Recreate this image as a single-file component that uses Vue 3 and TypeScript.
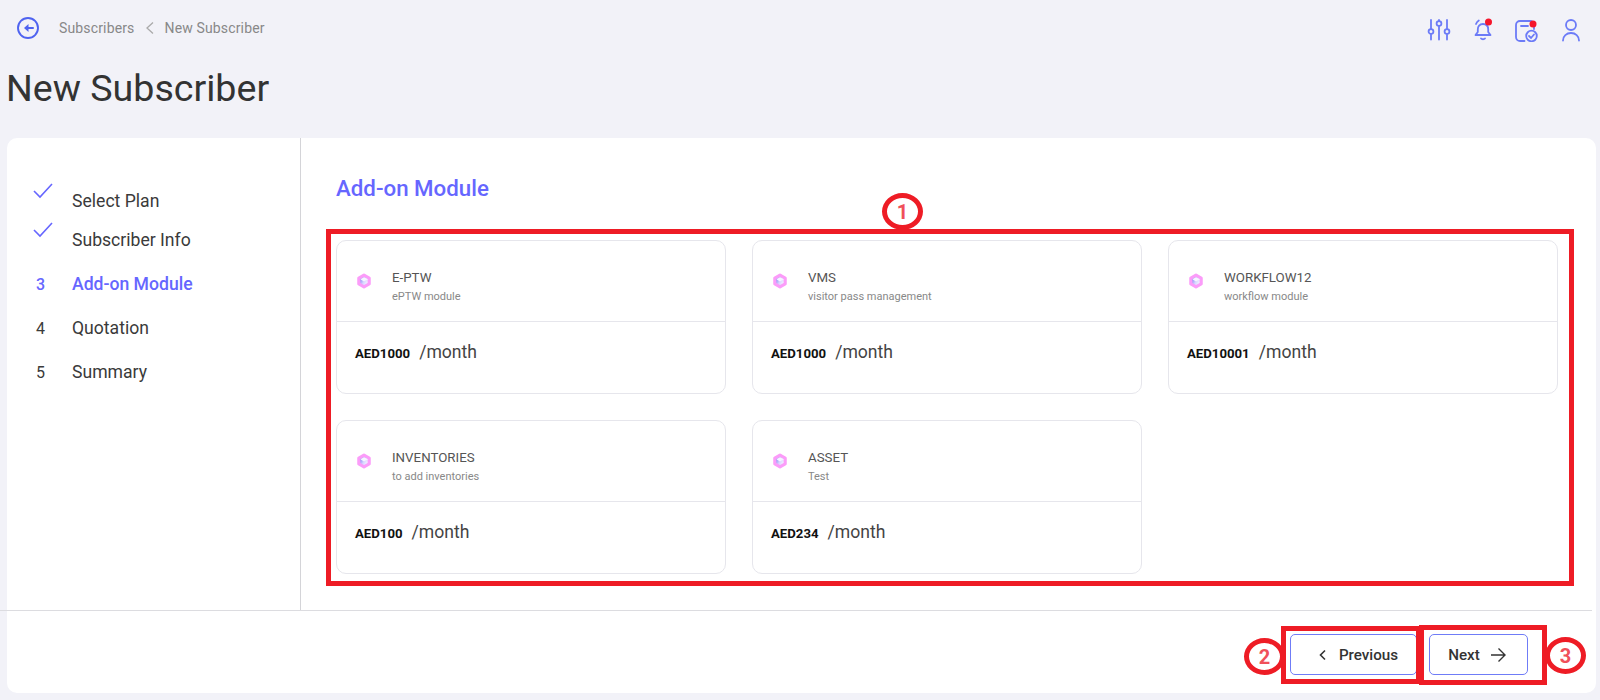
<script setup lang="ts">
interface Step { mark: string; label: string; state: 'done' | 'active' | 'todo' }
interface Mod { name: string; desc: string; price: string }

const steps: Step[] = [
  { mark: '', label: 'Select Plan', state: 'done' },
  { mark: '', label: 'Subscriber Info', state: 'done' },
  { mark: '3', label: 'Add-on Module', state: 'active' },
  { mark: '4', label: 'Quotation', state: 'todo' },
  { mark: '5', label: 'Summary', state: 'todo' },
]

const modules: Mod[] = [
  { name: 'E-PTW', desc: 'ePTW module', price: 'AED1000' },
  { name: 'VMS', desc: 'visitor pass management', price: 'AED1000' },
  { name: 'WORKFLOW12', desc: 'workflow module', price: 'AED10001' },
  { name: 'INVENTORIES', desc: 'to add inventories', price: 'AED100' },
  { name: 'ASSET', desc: 'Test', price: 'AED234' },
]
</script>

<template>
  <div class="page">
    <svg width="0" height="0" class="defs">
      <defs>
        <linearGradient id="cubeFill" x1="0" y1="0.1" x2="1" y2="0.7">
          <stop offset="0" stop-color="#5f66f0" />
          <stop offset="0.55" stop-color="#d6d4ff" />
          <stop offset="1" stop-color="#ffffff" />
        </linearGradient>
      </defs>
    </svg>
    <header class="topbar">
      <div class="crumbs">
        <svg class="back" width="24" height="24" viewBox="0 0 24 24" fill="none">
          <circle cx="12" cy="12" r="10" stroke="#4f63f0" stroke-width="1.9" />
          <path d="M17 12H11" stroke="#4f63f0" stroke-width="2" stroke-linecap="round" />
          <path d="M12.500 8L8 12l4.500 4z" fill="#4f63f0" />
        </svg>
        <span>Subscribers</span>
        <svg class="sep" width="10" height="14" viewBox="0 0 10 14" fill="none">
          <path d="M8 1.500L2 7l6 5.500" stroke="#aaa" stroke-width="1.300" />
        </svg>
        <span>New Subscriber</span>
      </div>
      <div class="tools">
        <svg width="24" height="24" viewBox="0 0 24 24" fill="none" stroke="#6c7bf7" stroke-width="1.800" stroke-linecap="round">
          <path d="M4 2v9M4 16.500v5M12 2v1M12 8.500v13M20 2v9M20 16.500v5" />
          <circle cx="4" cy="13.500" r="2.400" />
          <circle cx="12" cy="5.500" r="2.400" />
          <circle cx="20" cy="13.500" r="2.400" />
        </svg>
        <svg width="24" height="24" viewBox="0 0 24 24" fill="none" stroke="#6c7bf7" stroke-width="1.800" stroke-linecap="round" stroke-linejoin="round">
          <path d="M12 6c-3.500 0-5.200 2.500-5.200 5.500V14l-2.300 3h15l-2.300-3v-2.500c0-3-1.700-5.500-5.200-5.500z" />
          <path d="M10 20.500c.8 1 3.200 1 4 0" />
          <path d="M5 6c.6-1.500 1.600-2.700 2.800-3.500" />
          <circle cx="17.500" cy="4" r="3.500" fill="#f5162c" stroke="none" />
        </svg>
        <svg width="24" height="24" viewBox="0 0 24 24" fill="none" stroke="#6c7bf7" stroke-width="1.800" stroke-linecap="round">
          <path d="M9.500 23H5a4 4 0 0 1-4-4V7a4 4 0 0 1 4-4h10a4 4 0 0 1 4 4v4" />
          <path d="M6 8h7" />
          <circle cx="16.500" cy="18" r="5.300" />
          <path d="M14 18l2 2 3-3.500" />
          <circle cx="18" cy="6" r="3.500" fill="#f5162c" stroke="none" />
        </svg>
        <svg width="24" height="24" viewBox="0 0 24 24" fill="none" stroke="#6c7bf7" stroke-width="1.800" stroke-linecap="round">
          <circle cx="12" cy="7" r="5" />
          <path d="M4 22.500c0-4.500 3.500-7.500 8-7.500s8 3 8 7.500" />
        </svg>
      </div>
    </header>

    <h1 class="title">New Subscriber</h1>

    <section class="panel">
      <div class="panel-body">
        <aside class="steps">
          <div v-for="s in steps" :key="s.label" class="step" :class="s.state">
            <span class="mark">
              <svg v-if="s.state === 'done'" width="22" height="18" viewBox="0 0 22 18" fill="none">
                <path d="M2 9l6 6L20 2" stroke="#6666ff" stroke-width="1.600" />
              </svg>
              <template v-else>{{ s.mark }}</template>
            </span>
            <span class="label">{{ s.label }}</span>
          </div>
        </aside>

        <main class="content">
          <h2 class="heading">Add-on Module</h2>
          <div class="grid">
            <article v-for="m in modules" :key="m.name" class="mod">
              <div class="mod-head">
                <svg class="cube" width="18" height="18" viewBox="0 0 16 16">
                  <path d="M8 2.800l4.600 2.600v5.200L8 13.200l-4.600-2.600V5.400z" fill="url(#cubeFill)" stroke="#fb9cf9" stroke-width="2.800" stroke-linejoin="round" />
                  <path d="M8 8.500l3.300-2L8 4.700 4.700 6.500z" fill="#f6f5ff" />
                </svg>
                <div class="mod-text">
                  <div class="mod-name">{{ m.name }}</div>
                  <div class="mod-desc">{{ m.desc }}</div>
                </div>
              </div>
              <div class="mod-price">
                <b>{{ m.price }}</b>
                <span>/month</span>
              </div>
            </article>
          </div>
        </main>
      </div>

      <footer class="actions">
        <button class="btn prev" type="button">
          <svg width="12" height="14" viewBox="0 0 12 14" fill="none">
            <path d="M8 2.500L3.500 7 8 11.500" stroke="#333" stroke-width="1.600" />
          </svg>
          Previous
        </button>
        <button class="btn next" type="button">
          Next
          <svg width="18" height="16" viewBox="0 0 18 16" fill="none">
            <path d="M2 8h14M9.500 1.500L16 8l-6.500 6.500" stroke="#333" stroke-width="1.400" />
          </svg>
        </button>
      </footer>
    </section>

    <!-- Red annotations drawn over the screenshot -->
    <div class="pin pin-1">1</div>
    <div class="pin pin-2">2</div>
    <div class="pin pin-3">3</div>
    <div class="box box-grid"></div>
    <div class="box box-prev"></div>
    <div class="box box-next"></div>
  </div>
</template>

<style>
html, body { margin: 0; background: #f2f2f8; }
</style>

<style scoped>
.page {
  position: relative;
  width: 1600px;
  height: 700px;
  overflow: hidden;
  background: #f2f2f8;
  font-family: Roboto, "Liberation Sans", sans-serif;
  color: #333;
}
.defs { position: absolute; }
.topbar {
  display: flex;
  justify-content: space-between;
  align-items: center;
  height: 56px;
  padding: 0 17px 0 16px;
}
.crumbs {
  display: flex;
  align-items: center;
  font-size: 14px;
  letter-spacing: .15px;
  color: #888;
}
.back { margin-right: 19px; }
.sep { margin: 0 10px; }
.tools { display: flex; gap: 20px; padding-top: 3px; }
.title {
  margin: 0;
  padding: 8px 0 0 6px;
  font-size: 37.600px;
  line-height: 48px;
  font-weight: 400;
  color: #333;
}
.panel {
  margin: 26px 4px 0 7px;
  height: 555px;
  background: #fff;
  border-radius: 10px;
  display: flex;
  flex-direction: column;
}
.panel-body { display: flex; height: 472px; }
.steps {
  width: 294px;
  box-sizing: border-box;
  border-right: 1px solid #d4d4d8;
  padding: 41px 0 0 19px;
}
.step {
  display: flex;
  align-items: center;
  height: 44px;
  font-size: 17.600px;
  color: #3a3a3a;
}
.step.done { height: 39px; }
.step.done .mark { align-self: flex-start; padding-top: 3px; padding-left: 6px; }
.step.done .label { padding-top: 4px; }
.step.active { margin-top: 5px; color: #6666ff; font-weight: 500; }
.mark {
  width: 46px;
  padding-left: 10px;
  box-sizing: border-box;
  font-size: 16px;
}
.content { flex: 1; padding: 35px 36px 0 35px; }
.heading {
  margin: 0 0 37px;
  font-size: 22.300px;
  line-height: 30px;
  font-weight: 500;
  color: #6666ff;
}
.grid {
  display: grid;
  grid-template-columns: repeat(3, 390px);
  column-gap: 26px;
  row-gap: 26px;
}
.mod {
  height: 154px;
  box-sizing: border-box;
  border: 1px solid #e6e6ec;
  border-radius: 10px;
}
.mod-head {
  display: flex;
  align-items: center;
  height: 81px;
  box-sizing: border-box;
  padding-left: 18px;
  border-bottom: 1px solid #e6e6ec;
}
.cube { margin-right: 19px; }
.mod-text { padding-top: 10px; }
.mod-name { font-size: 13.300px; line-height: 18px; color: #555; }
.mod-desc { font-size: 11px; line-height: 14px; margin-top: 3px; color: #888; }
.mod-price {
  display: flex;
  align-items: baseline;
  gap: 9px;
  padding: 20px 0 0 18px;
}
.mod-price b { font-size: 13.200px; font-weight: 700; color: #111; }
.mod-price span { font-size: 17.600px; font-weight: 400; color: #444; }
.actions {
  flex: 1;
  border-top: 1px solid #dcdce0;
  margin-right: 4px;
  margin-left: -7px;
  display: flex;
  justify-content: flex-end;
  gap: 12px;
  padding: 23px 64px 0 0;
}
.btn {
  display: flex;
  align-items: center;
  justify-content: center;
  height: 41px;
  box-sizing: border-box;
  background: #fff;
  border: 1px solid #6f7cf7;
  border-radius: 5px;
  font-family: inherit;
  font-size: 15.200px;
  font-weight: 500;
  color: #333;
}
.prev { width: 127px; gap: 10px; padding: 0 0 0 8px; }
.next { width: 99px; gap: 9px; padding: 0 2px 0 0; }

.box { position: absolute; border: 5px solid #ee1c25; box-sizing: border-box; }
.box-grid { left: 326px; top: 229px; width: 1248px; height: 357px; }
.box-prev { left: 1281px; top: 626px; width: 140px; height: 58px; }
.box-next { left: 1419px; top: 625px; width: 128px; height: 60px; }
.pin {
  position: absolute;
  width: 41px;
  height: 37px;
  box-sizing: border-box;
  border: 5px solid #ee1c25;
  border-radius: 50%;
  background: #fff;
  color: #f0505a;
  font-size: 20px;
  font-weight: 700;
  display: flex;
  align-items: center;
  justify-content: center;
}
.pin-1 { left: 882px; top: 193px; }
.pin-2 { left: 1244px; top: 638px; }
.pin-3 { left: 1545px; top: 637px; }
</style>
